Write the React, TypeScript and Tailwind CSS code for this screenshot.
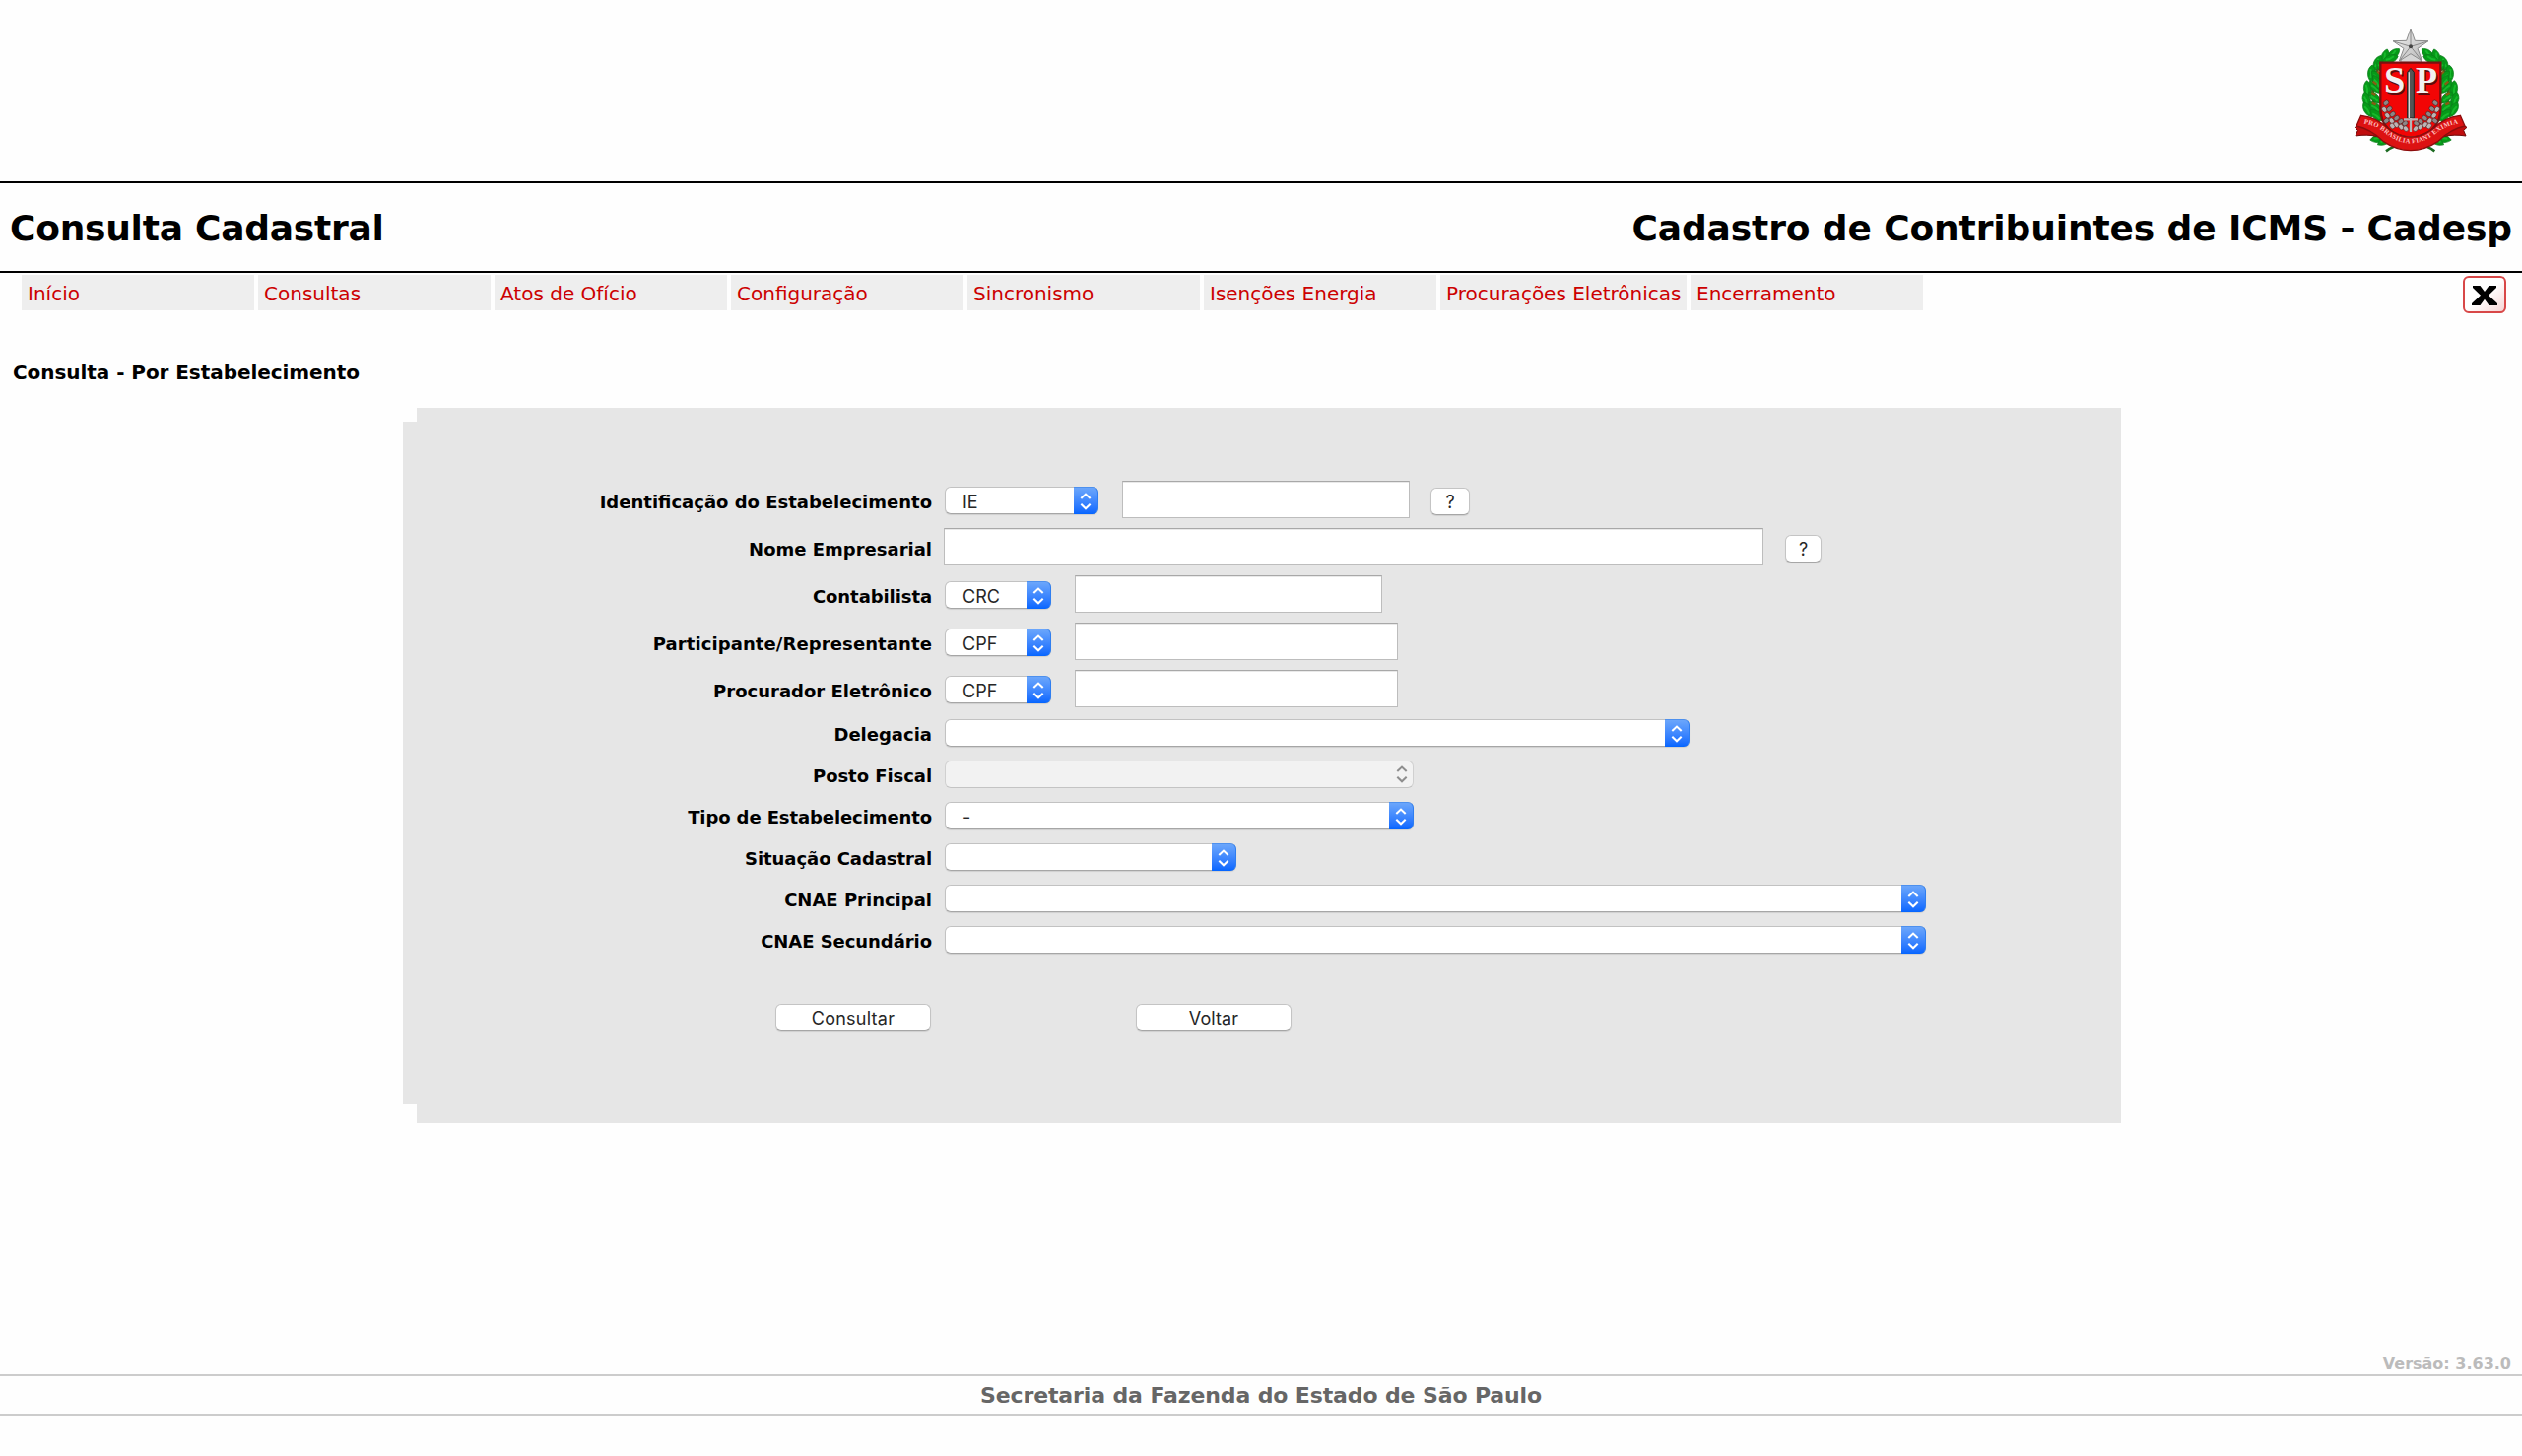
import type { ReactNode } from "react";

const MENU = [
  { label: "Início", width: "w-[236px]" },
  { label: "Consultas", width: "w-[236px]" },
  { label: "Atos de Ofício", width: "w-[236px]" },
  { label: "Configuração", width: "w-[236px]" },
  { label: "Sincronismo", width: "w-[236px]" },
  { label: "Isenções Energia", width: "w-[236px]" },
  { label: "Procurações Eletrônicas", width: "w-[250px]" },
  { label: "Encerramento", width: "w-[236px]" },
];

// One side of the laurel wreath; the other side is its mirror image.
const LEAVES: [number, number, number][] = [
  [207, 136, 50],
  [183, 145, 15],
  [198, 150, 70],
  [160, 163, 25],
  [174, 176, -35],
  [142, 194, 5],
  [160, 206, -40],
  [130, 241, -5],
  [154, 236, -45],
  [127, 275, -15],
  [153, 268, -45],
  [131, 305, -30],
  [155, 298, -50],
  [158, 322, -50],
  [160, 222, -30],
  [162, 392, 80],
  [182, 398, 60],
];

function Wreath() {
  return (
    <g>
      <path d="M222 128Q140 165 146 260Q150 340 190 385" fill="none" stroke="#4d5a1c" strokeWidth="9" />
      {LEAVES.map(([x, y, a]) => (
        <g key={`${x}-${y}`} transform={`translate(${x} ${y}) rotate(${a})`}>
          <path d="M0-26C14-16 17 8 0 25C-17 8-14-16 0-26Z" fill="#069a18" stroke="#0b7a1a" strokeWidth="2" />
          <path d="M-4-14Q1 0-2 13" stroke="#17b92c" strokeWidth="6" fill="none" />
        </g>
      ))}
      <path d="M160 188l10 9M146 218l11 9M142 252l12 6M143 284l12 5" stroke="#8a5a12" strokeWidth="7" />
    </g>
  );
}

function CoffeeBranch() {
  return (
    <g stroke="#3a1010" strokeWidth="1.5">
      {[
        [186, 284], [181, 304], [196, 302], [190, 322], [206, 318], [203, 338], [218, 330],
        [217, 350], [231, 340], [232, 357], [244, 346], [246, 362], [187, 338], [205, 354],
      ].map(([x, y], i) => (
        <ellipse key={i} cx={x} cy={y} rx="9" ry="7" fill={i % 2 ? "#bdb4b4" : "#8d8585"} transform={`rotate(${i % 2 ? 50 : -40} ${x} ${y})`} />
      ))}
    </g>
  );
}

function Emblem() {
  return (
    <svg viewBox="0 0 600 510" className="h-[170px] w-[200px]">
      <defs>
        <path id="motto" d="M114 346Q158 352 186 378Q261 434 336 378Q366 352 410 346" />
        <linearGradient id="silver" x1="0" y1="0" x2="1" y2="1">
          <stop offset="0" stopColor="#f4f4f4" />
          <stop offset="1" stopColor="#b4b4b4" />
        </linearGradient>
      </defs>
      <path d="M186 430Q210 412 240 408M334 430Q310 412 282 408" stroke="#1c6b22" strokeWidth="8" fill="none" />
      <Wreath />
      <g transform="translate(522 0) scale(-1 1)">
        <Wreath />
      </g>
      <path d="M230 160Q233 134 261 132Q290 134 293 160Z" fill="#d6d6d6" stroke="#999" strokeWidth="3" />
      <path
        d="M261 57L274 94L315 95L282 118L296 156L261 134L226 156L240 118L207 95L248 94Z"
        fill="url(#silver)"
        stroke="#8b8b8b"
        strokeWidth="3"
      />
      <path d="M261 60V112L313 96M261 112L294 154M261 112L228 154M261 112L209 96" stroke="#8a8a8a" strokeWidth="3" fill="none" />
      <circle cx="261" cy="112" r="6" fill="#444" />
      <path d="M169 161H352V300Q352 378 261 390Q169 378 169 300Z" fill="#f20505" stroke="#7a1010" strokeWidth="7" />
      <CoffeeBranch />
      <g transform="translate(522 0) scale(-1 1)">
        <CoffeeBranch />
      </g>
      <text x="184" y="257" fontFamily="Liberation Serif, serif" fontWeight="700" fontSize="116" fill="#5b0d0d" textLength="64" lengthAdjust="spacingAndGlyphs">S</text>
      <text x="280" y="257" fontFamily="Liberation Serif, serif" fontWeight="700" fontSize="116" fill="#5b0d0d" textLength="66" lengthAdjust="spacingAndGlyphs">P</text>
      <text x="180" y="253" fontFamily="Liberation Serif, serif" fontWeight="700" fontSize="116" fill="#f1f1f1" textLength="64" lengthAdjust="spacingAndGlyphs">S</text>
      <text x="276" y="253" fontFamily="Liberation Serif, serif" fontWeight="700" fontSize="116" fill="#f1f1f1" textLength="66" lengthAdjust="spacingAndGlyphs">P</text>
      <path d="M251 190L261 178L271 190V330H251Z" fill="#555" stroke="#222" strokeWidth="3" />
      <path d="M256 190V330" stroke="#d8d8d8" strokeWidth="4" />
      <path d="M240 334H282M261 330V372" stroke="#b5b5b5" strokeWidth="7" />
      <path d="M222 382Q261 396 300 382" stroke="#e4e4e4" strokeWidth="6" fill="none" />
      <path d="M112 345L91 358L100 367L93 384Q130 378 160 386L172 360ZM410 345L432 358L422 367L429 384Q392 378 362 386L350 360Z" fill="#c00d0d" stroke="#6f0b0b" strokeWidth="3" />
      <path
        d="M110 322Q160 328 192 362Q261 412 330 362Q362 328 412 322L426 354Q384 362 345 400Q261 456 177 400Q138 362 96 354Z"
        fill="#dc1212"
        stroke="#8c0d0d"
        strokeWidth="4"
      />
      <text fontFamily="Liberation Serif, serif" fontWeight="700" fontSize="20" fill="#ffc4c4">
        <textPath href="#motto" startOffset="4" textLength="316">PRO BRASILIA FIANT EXIMIA</textPath>
      </text>
    </svg>
  );
}

function Select({ width, value, disabled = false, tall = false }: { width: string; value?: string; disabled?: boolean; tall?: boolean }) {
  const tone = disabled
    ? "bg-[#f2f2f2] border-[#d0d0d0] border-b-[#c4c4c4]"
    : "bg-white border-[#c2c2c2] border-b-[#a6a6a6] shadow-[0_1px_1px_rgba(0,0,0,0.1)]";
  return (
    <div className={`relative ml-[13px] flex h-[28px] shrink-0 items-center rounded-[6px] border ${tone} ${width} ${tall ? "mt-[2px]" : ""}`}>
      <span className="pt-[3px] pl-[17px] font-[Inter,sans-serif] text-[18px] leading-[20px] text-[#262626]">{value}</span>
      <div
        className={`absolute -top-px -right-px flex h-[28px] w-[25px] items-center justify-center rounded-r-[6px] ${
          disabled ? "text-[#8e8e8e]" : "border-t border-r border-t-[#4d90ee] border-r-[#2f7ef0] bg-linear-to-b from-[#6ba6fb] to-[#0365ff] text-white"
        }`}
      >
        <svg viewBox="0 0 12 18" className="h-[18px] w-[12px]" fill="none" stroke="currentColor" strokeWidth="2.1">
          <path d="M1.3 6L6 1.6L10.7 6M1.3 11.8L6 16.2L10.7 11.8" />
        </svg>
      </div>
    </div>
  );
}

function TextBox({ className }: { className: string }) {
  return (
    <input
      type="text"
      className={`h-[38px] shrink-0 border border-[#bdbdbd] border-t-[#a8a8a8] bg-white shadow-[inset_0_1px_0_#e9e9e9] ${className}`}
    />
  );
}

function PushButton({ className, children }: { className: string; children: ReactNode }) {
  return (
    <button
      className={`flex h-[28px] shrink-0 items-center justify-center rounded-[6px] border border-[#c4c4c4] border-b-[#a6a6a6] bg-white pt-px font-[Inter,sans-serif] text-[18px] leading-[20px] text-[#262626] shadow-[0_1px_1px_rgba(0,0,0,0.1)] ${className}`}
    >
      {children}
    </button>
  );
}

function Row({ label, tall = false, tracking = "", children }: { label: string; tall?: boolean; tracking?: string; children: ReactNode }) {
  return (
    <div className={`flex items-center ${tall ? "h-[48px]" : "h-[42px]"}`}>
      <label className={`w-[523px] shrink-0 text-right text-[18px] leading-[22px] font-bold ${tracking} ${tall ? "pt-[6px]" : "pt-[3px]"}`}>{label}</label>
      {children}
    </div>
  );
}

export default function App() {
  return (
    <div className="flex h-[1478px] w-[2560px] flex-col overflow-hidden bg-[#fefefe] font-['DejaVu_Sans',Verdana,sans-serif] text-black">
      <header className="flex h-[184px] justify-end pt-[10px]">
        <Emblem />
      </header>

      <div className="flex h-[93px] items-center justify-between border-y-2 border-black pt-[2px] pr-[10px] pl-[10px] text-[36px] leading-[44px] font-bold">
        <h1 className="tracking-[-0.25px]">Consulta Cadastral</h1>
        <h2 className="tracking-[-0.12px]">Cadastro de Contribuintes de ICMS - Cadesp</h2>
      </div>

      <div className="flex justify-between pt-[2px] pr-[16px] pl-[22px]">
        <nav className="flex gap-1">
          {MENU.map((item) => (
            <a
              key={item.label}
              className={`flex h-[36px] items-center bg-[#eeeeee] pt-[2px] pl-[6px] text-[20px] leading-[24px] whitespace-nowrap text-[#cc0000] ${item.width}`}
            >
              {item.label}
            </a>
          ))}
        </nav>
        <button className="mt-px flex h-[38px] w-[44px] items-center justify-center rounded-[6px] border-2 border-[#d84848] bg-linear-to-br from-white from-50% to-[#f6d5d5] pt-[2px]">
          <svg viewBox="0 0 26 20" className="h-[20px] w-[26px]">
            <path d="M1 0H8.500L13 6L17.500 0H25V2L17 9.800L26 18V20H17.500L13 13.800L8.500 20H0V18L9 9.800L1 2Z" fill="#000" />
          </svg>
        </button>
      </div>

      <h3 className="mt-[48px] ml-[13px] h-[24px] text-[20px] leading-[24px] font-bold tracking-[-0.06px]">Consulta - Por Estabelecimento</h3>

      <main className="mt-[24px] ml-[409px] flex">
        <div className="mt-[14px] h-[693px] w-[14px] bg-[#e6e6e6]" />
        <form className="h-[726px] w-[1730px] bg-[#e6e6e6] pt-[69px]">
          <Row label="Identificação do Estabelecimento" tall>
            <Select width="w-[156px]" value="IE" tall />
            <TextBox className="ml-[24px] w-[292px]" />
            <PushButton className="mt-[4px] ml-[21px] w-[40px]">?</PushButton>
          </Row>
          <Row label="Nome Empresarial" tall>
            <TextBox className="ml-[12px] w-[832px]" />
            <PushButton className="mt-[4px] ml-[22px] w-[37px]">?</PushButton>
          </Row>
          <Row label="Contabilista" tall tracking="tracking-[-0.08px]">
            <Select width="w-[108px]" value="CRC" tall />
            <TextBox className="ml-[24px] w-[312px]" />
          </Row>
          <Row label="Participante/Representante" tall tracking="tracking-[0.1px]">
            <Select width="w-[108px]" value="CPF" tall />
            <TextBox className="ml-[24px] w-[328px]" />
          </Row>
          <Row label="Procurador Eletrônico" tall>
            <Select width="w-[108px]" value="CPF" tall />
            <TextBox className="ml-[24px] w-[328px]" />
          </Row>
          <Row label="Delegacia">
            <Select width="w-[756px]" />
          </Row>
          <Row label="Posto Fiscal" tracking="tracking-[-0.06px]">
            <Select width="w-[476px]" disabled />
          </Row>
          <Row label="Tipo de Estabelecimento" tracking="tracking-[-0.1px]">
            <Select width="w-[476px]" value="-" />
          </Row>
          <Row label="Situação Cadastral" tracking="tracking-[-0.06px]">
            <Select width="w-[296px]" />
          </Row>
          <Row label="CNAE Principal">
            <Select width="w-[996px]" />
          </Row>
          <Row label="CNAE Secundário" tracking="tracking-[-0.06px]">
            <Select width="w-[996px]" />
          </Row>
          <div className="mt-[44px] ml-[364px] flex gap-[208px]">
            <PushButton className="w-[158px] tracking-[0.25px]">Consultar</PushButton>
            <PushButton className="w-[158px] tracking-[0.1px]">Voltar</PushButton>
          </div>
        </form>
      </main>

      <footer className="mt-auto mb-[41px]">
        <p className="pr-[11px] pb-[1px] text-right text-[16px] leading-[18px] font-bold text-[#bbbbbb]">Versão: 3.63.0</p>
        <div className="flex h-[42px] items-center justify-center border-y-2 border-[#cccccc] pt-[2px] text-[22px] leading-[26px] font-bold tracking-[-0.12px] text-[#666666]">
          Secretaria da Fazenda do Estado de São Paulo
        </div>
      </footer>
    </div>
  );
}
